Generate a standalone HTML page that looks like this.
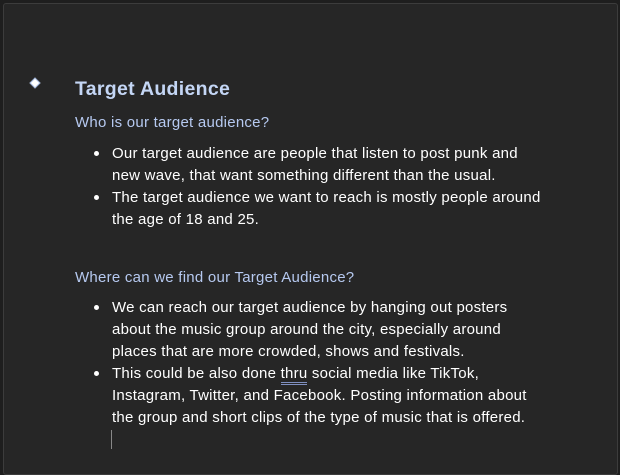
<!DOCTYPE html>
<html><head><meta charset="utf-8"><style>
html,body{margin:0;padding:0;background:#1e1e1e;}
body{width:620px;height:468px;position:relative;overflow:hidden;font-family:"Liberation Sans",sans-serif;}
.pane{position:absolute;left:3px;top:3px;width:613px;height:470px;background:#262626;border:1px solid #3c3c3c;border-radius:3px;}
.t{position:absolute;white-space:nowrap;color:#fff;font-size:15px;line-height:22px;letter-spacing:0.25px;}
.h{color:#c4d6f5;font-weight:bold;font-size:19.5px;letter-spacing:0.3px;}
.s{color:#b6c9f0;}
.b{position:absolute;width:5px;height:5px;border-radius:50%;background:#fff;}
.d{position:absolute;left:31px;top:79px;width:6px;height:6px;background:#fff;border:1px solid #9bb0d8;transform:rotate(45deg);}
</style></head><body>
<div class="pane"></div>
<div class="d"></div>
<div class="t h" style="left:75px;top:78px;">Target Audience</div>
<div class="t s" style="left:75px;top:112px;">Who is our target audience?</div>
<div class="b" style="left:94px;top:151px"></div>
<div class="t" style="left:112px;top:143px;">Our target audience are people that listen to post punk and</div>
<div class="t" style="left:112px;top:165px;">new wave, that want something different than the usual.</div>
<div class="b" style="left:94px;top:195px"></div>
<div class="t" style="left:112px;top:187px;">The target audience we want to reach is mostly people around</div>
<div class="t" style="left:112px;top:209px;">the age of 18 and 25.</div>
<div class="t s" style="left:75px;top:267px;">Where can we find our Target Audience?</div>
<div class="b" style="left:94px;top:305px"></div>
<div class="t" style="left:112px;top:297px;">We can reach our target audience by hanging out posters</div>
<div class="t" style="left:112px;top:319px;">about the music group around the city, especially around</div>
<div class="t" style="left:112px;top:341px;">places that are more crowded, shows and festivals.</div>
<div class="b" style="left:94px;top:371px"></div>
<div class="t" style="left:112px;top:363px;">This could be also done <span style="border-bottom:3px double #7f8fc0">thru</span> social media like TikTok,</div>
<div class="t" style="left:112px;top:385px;">Instagram, Twitter, and Facebook. Posting information about</div>
<div class="t" style="left:112px;top:407px;">the group and short clips of the type of music that is offered.</div>
<div style="position:absolute;left:111px;top:430px;width:1px;height:19px;background:#888;"></div>
</body></html>
